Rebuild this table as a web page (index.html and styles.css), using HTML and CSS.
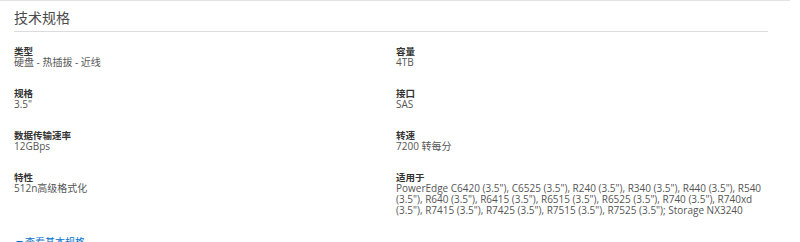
FILE: index.html
```html
<!DOCTYPE html>
<html lang="zh-CN">
<head>
<meta charset="utf-8">
<link rel="stylesheet" href="styles.css">
</head>
<body>
<section class="panel">
  <header class="panel-header">
    <h2 class="panel-title">技术规格</h2>
  </header>
  <dl class="specs">
    <div class="spec">
      <dt>类型</dt>
      <dd>硬盘 - 热插拔 - 近线</dd>
    </div>
    <div class="spec">
      <dt>容量</dt>
      <dd>4TB</dd>
    </div>
    <div class="spec">
      <dt>规格</dt>
      <dd>3.5"</dd>
    </div>
    <div class="spec">
      <dt>接口</dt>
      <dd>SAS</dd>
    </div>
    <div class="spec">
      <dt>数据传输速率</dt>
      <dd>12GBps</dd>
    </div>
    <div class="spec">
      <dt>转速</dt>
      <dd>7200 转每分</dd>
    </div>
    <div class="spec">
      <dt>特性</dt>
      <dd>512n高级格式化</dd>
    </div>
    <div class="spec">
      <dt>适用于</dt>
      <dd>PowerEdge C6420 (3.5"), C6525 (3.5"), R240 (3.5"), R340 (3.5"), R440 (3.5"), R540 (3.5"), R640 (3.5"), R6415 (3.5"), R6515 (3.5"), R6525 (3.5"), R740 (3.5"), R740xd (3.5"), R7415 (3.5"), R7425 (3.5"), R7515 (3.5"), R7525 (3.5"); Storage NX3240</dd>
    </div>
  </dl>
  <a class="more" href="#"><span class="caret">▼</span>查看基本规格</a>
</section>
</body>
</html>
```
FILE: styles.css
```css
html, body {
  margin: 0;
  padding: 0;
  background: #fff;
}
body {
  font-family: "Open Sans", "Noto Sans CJK SC", sans-serif;
  color: #444;
}
.panel {
  width: 790px;
  border-top: 1px solid #e4e4e4;
}
.panel-header {
  margin: 0 22px 0 14px;
  padding: 7px 0 3px;
  border-bottom: 1px solid #dcdcdc;
}
.panel-title {
  margin: 0;
  font-size: 14px;
  line-height: 20px;
  font-weight: normal;
  color: #4a4a4a;
}
.specs {
  display: grid;
  grid-template-columns: 382px 382px;
  row-gap: 21px;
  margin: 15px 0 0 14px;
  padding: 0;
}
.spec dt {
  font-size: 9.5px;
  line-height: 10px;
  font-weight: bold;
  color: #333;
}
.spec dd {
  margin: 0;
  font-size: 10px;
  line-height: 11px;
  color: #555;
}
.more {
  display: inline-block;
  margin: 20px 0 0 16px;
  font-size: 10px;
  line-height: 12px;
  color: #0672cb;
  text-decoration: none;
}
.caret {
  font-size: 7px;
  margin-right: 2px;
}
```
